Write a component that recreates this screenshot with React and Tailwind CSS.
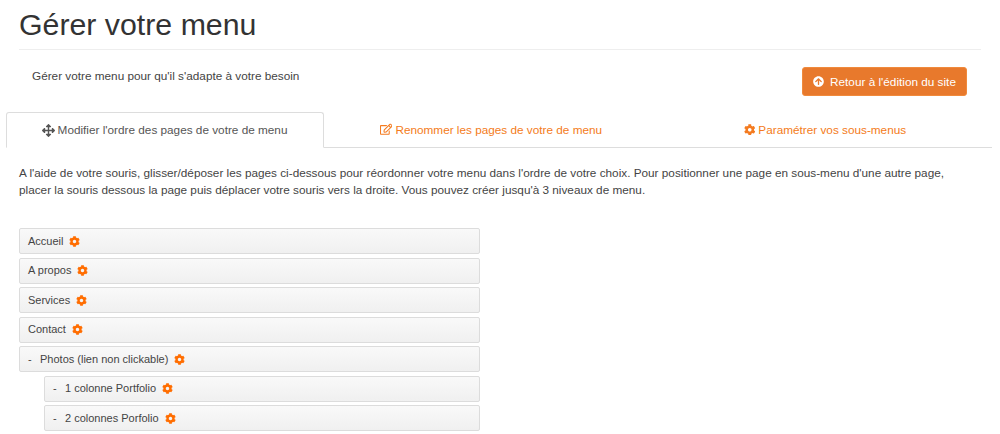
import { FaArrowsAlt, FaRegEdit, FaCog, FaArrowCircleUp } from "react-icons/fa";

const items = [
  { label: "Accueil" },
  { label: "A propos" },
  { label: "Services" },
  { label: "Contact" },
  { label: "Photos (lien non clickable)", dash: true },
  { label: "1 colonne Portfolio", dash: true, sub: true },
  { label: "2 colonnes Porfolio", dash: true, sub: true },
];

function MenuItem({ label, dash, sub }) {
  return (
    <div className={`h-[26px] mb-[3.5px] flex items-center pl-[8px] rounded-[2px] border border-[#dcdcdc] bg-gradient-to-b from-[#f9f9f9] to-[#f0f0f0] text-[11px] text-[#444444] ${sub ? "ml-[25px]" : ""}`}>
      {dash && <span className="w-[12px]">-</span>}
      <span>{label}</span>
      <FaCog className="ml-[6px] text-[#ff6d00] text-[11px]" />
    </div>
  );
}

export default function App() {
  return (
    <div className="h-[434px] overflow-hidden bg-white text-[#333333] font-['Liberation_Sans',Arial,sans-serif]">
      <div className="mx-[19px] pr-[1px] pt-[6px] h-[50px] border-b border-[#eeeeee]">
        <h1 className="text-[30.3px] leading-[38px] text-[#333333]">Gérer votre menu</h1>
      </div>
      <div className="flex justify-between pl-[32px] pr-[33px] pt-[17px] h-[62px]">
        <p className="text-[11.78px] leading-[18px] text-[#444444]">Gérer votre menu pour qu'il s'adapte à votre besoin</p>
        <button className="w-[165px] h-[29px] flex items-center justify-center gap-[6px] rounded-[3px] bg-[#e8792c] border border-[#f08a3c] text-white text-[11.78px]">
          <FaArrowCircleUp className="text-[11px]" />
          Retour à l'édition du site
        </button>
      </div>
      <div className="ml-[6px] mr-[8px] flex h-[36px] border-b border-[#dddddd] text-[11.78px]">
        <div className="w-[318px] h-[36px] flex items-center justify-center gap-[3px] pr-[1px] rounded-t-[3px] border border-[#dddddd] border-b-white bg-white text-[#555555]">
          <FaArrowsAlt className="text-[13px]" />
          Modifier l'ordre des pages de votre de menu
        </div>
        <div className="w-[334px] flex items-center justify-center gap-[3px] text-[#f47b20]">
          <FaRegEdit className="text-[12.5px]" />
          Renommer les pages de votre de menu
        </div>
        <div className="w-[334px] flex items-center justify-center gap-[3px] text-[#f47b20]">
          <FaCog className="text-[11.5px]" />
          Paramétrer vos sous-menus
        </div>
      </div>
      <p className="ml-[19px] mt-[16px] w-[940px] text-[11.78px] leading-[17px] text-[#444444]">
        A l'aide de votre souris, glisser/déposer les pages ci-dessous pour réordonner votre menu dans l'ordre de votre choix. Pour positionner une page en sous-menu d'une autre page, placer la souris dessous la page puis déplacer votre souris vers la droite. Vous pouvez créer jusqu'à 3 niveaux de menu.
      </p>
      <div className="ml-[19px] mt-[30px] w-[461px]">
        {items.map((it) => (
          <MenuItem key={it.label} {...it} />
        ))}
      </div>
    </div>
  );
}
